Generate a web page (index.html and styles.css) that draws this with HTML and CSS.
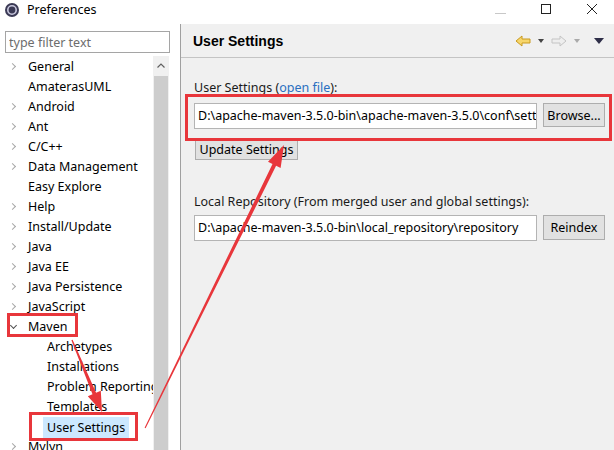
FILE: index.html
```html
<!DOCTYPE html>
<html lang="en">
<head>
    <meta charset="UTF-8">
    <meta name="viewport" content="width=device-width, initial-scale=1.0">
    <title>Preferences</title>
    <link rel="stylesheet" href="styles.css">
</head>
<body>

<div class="window">
    <div class="titlebar">
        <svg class="app-icon" width="16" height="16" viewBox="0 0 16 16">
            <circle cx="8" cy="8" r="7" fill="#3b3a55"/>
            <circle cx="8" cy="8" r="4.2" fill="none" stroke="#c9c8de" stroke-width="1.6"/>
            <circle cx="8" cy="8" r="2.2" fill="#3b3a55"/>
        </svg>
        <span class="title">Preferences</span>
        <div class="controls">
            <span class="ctl ctl-min"></span>
            <span class="ctl ctl-max"></span>
            <svg class="ctl" width="12" height="12" viewBox="0 0 12 12">
                <path d="M1 1 L11 11 M11 1 L1 11" stroke="#222" stroke-width="1"/>
            </svg>
        </div>
    </div>

    <div class="main">
        <aside class="sidebar">
            <input class="filter" type="text" placeholder="type filter text">
            <div class="tree-wrap">
                <ul class="tree">
                    <li><span class="chev"></span>General</li>
                    <li><span class="chev none"></span>AmaterasUML</li>
                    <li><span class="chev"></span>Android</li>
                    <li><span class="chev"></span>Ant</li>
                    <li><span class="chev"></span>C/C++</li>
                    <li><span class="chev"></span>Data Management</li>
                    <li><span class="chev none"></span>Easy Explore</li>
                    <li><span class="chev"></span>Help</li>
                    <li><span class="chev"></span>Install/Update</li>
                    <li><span class="chev"></span>Java</li>
                    <li><span class="chev"></span>Java EE</li>
                    <li><span class="chev"></span>Java Persistence</li>
                    <li><span class="chev"></span>JavaScript</li>
                    <li><span class="chev open"></span>Maven</li>
                    <li class="child">Archetypes</li>
                    <li class="child">Installations</li>
                    <li class="child">Problem Reporting</li>
                    <li class="child">Templates</li>
                    <li class="child"><span class="selected">User Settings</span></li>
                    <li><span class="chev"></span>Mylyn</li>
                </ul>
                <div class="scrollbar">
                    <div class="scroll-up">
                        <svg width="8" height="5" viewBox="0 0 8 5"><path d="M0.5 4.5 L4 1 L7.5 4.5" fill="none" stroke="#606060" stroke-width="1.2"/></svg>
                    </div>
                    <div class="scroll-thumb"></div>
                </div>
            </div>
        </aside>

        <section class="panel">
            <header class="panel-head">
                <h1>User Settings</h1>
                <div class="nav">
                    <svg width="16" height="12" viewBox="0 0 16 12">
                        <path d="M1 6 L7 1 L7 4 L15 4 L15 8 L7 8 L7 11 Z" fill="#f7d66b" stroke="#c99a1e" stroke-width="1"/>
                    </svg>
                    <span class="drop"></span>
                    <svg width="16" height="12" viewBox="0 0 16 12">
                        <path d="M15 6 L9 1 L9 4 L1 4 L1 8 L9 8 L9 11 Z" fill="#eeeeee" stroke="#c4c4c4" stroke-width="1"/>
                    </svg>
                    <span class="drop light"></span>
                    <span class="drop dark"></span>
                </div>
            </header>
            <div class="panel-body">
                <div class="label">User Settings (<a href="#">open file</a>):</div>
                <div class="field-row">
                    <div class="textbox">D:\apache-maven-3.5.0-bin\apache-maven-3.5.0\conf\settings.xml</div>
                    <button class="btn">Browse...</button>
                </div>
                <button class="btn update">Update Settings</button>

                <div class="label repo-label">Local Repository (From merged user and global settings):</div>
                <div class="field-row repo-row">
                    <div class="textbox">D:\apache-maven-3.5.0-bin\local_repository\repository</div>
                    <button class="btn">Reindex</button>
                </div>
            </div>
        </section>
    </div>

    <!-- red markup drawn over the screenshot -->
    <svg class="annotations" width="614" height="450" viewBox="0 0 614 450">
        <g fill="none" stroke="#e8363b" stroke-width="3">
            <rect x="8.5" y="314.5" width="68" height="21"/>
            <rect x="30.5" y="413.5" width="106" height="26"/>
            <rect x="186.5" y="95.5" width="424" height="44"/>
        </g>
        <g fill="#e8363b">
            <polygon points="71.4,340.3 92.5,394.3 87.8,396.2 102,412 100.8,390.8 96.1,392.7 72.6,339.7"/>
            <polygon points="144.6,427.8 272.5,164.0 268.0,161.7 284,145 280.6,167.9 276.1,165.7 145.6,428.3"/>
        </g>
    </svg>
</div>

</body>
</html>
```

FILE: styles.css
```css
* {
    box-sizing: border-box;
}
body {
    margin: 0;
    background: #fff;
    font-family: "Noto Sans", "Open Sans", sans-serif;
    font-size: 12px;
    color: #000;
}
.window {
    position: relative;
    width: 614px;
    height: 450px;
    overflow: hidden;
    background: #fff;
}

/* title bar */
.titlebar {
    height: 24px;
    display: flex;
    align-items: center;
    padding-left: 4px;
}
.app-icon {
    margin-top: -4px;
}
.title {
    margin-left: 7px;
    margin-top: -6px;
    font-size: 12.5px;
}
.controls {
    margin-left: auto;
    display: flex;
    align-items: center;
    gap: 35px;
    padding-right: 16px;
    margin-top: -7px;
}
.ctl {
    display: block;
}
.ctl-min {
    width: 11px;
    height: 1px;
    background: #c8c8c8;
    margin-top: 9px;
}
.ctl-max {
    width: 10px;
    height: 10px;
    border: 1px solid #222;
}

.main {
    display: flex;
    height: 426px;
}

/* left tree */
.sidebar {
    width: 180px;
    flex: none;
    padding-top: 7px;
}
.filter {
    display: block;
    width: 165px;
    height: 22px;
    margin-left: 5px;
    border: 1px solid #a5a5a5;
    padding: 0 3px;
    font: inherit;
    font-size: 12.5px;
}
.filter::placeholder {
    color: #6d6d6d;
}
.tree-wrap {
    display: flex;
    margin-top: 3px;
    height: 400px;
}
.tree {
    list-style: none;
    margin: 1px 0 0 0;
    padding: 0;
    width: 153px;
    overflow: hidden;
}
.tree li {
    height: 20px;
    line-height: 20px;
    white-space: nowrap;
    display: flex;
    align-items: center;
    font-size: 12.5px;
}
.chev {
    width: 28px;
    height: 20px;
    flex: none;
    position: relative;
}
.chev::before {
    content: "";
    position: absolute;
    left: 10px;
    top: 7px;
    width: 4px;
    height: 4px;
    border-right: 1.3px solid #a8a8a8;
    border-bottom: 1.3px solid #a8a8a8;
    transform: rotate(-45deg);
}
.chev.none::before {
    display: none;
}
.chev.open::before {
    left: 11px;
    top: 6px;
    border-color: #505050;
    transform: rotate(45deg);
}
.tree li.child {
    padding-left: 47px;
}
.selected {
    background: #cce8ff;
    margin-left: -4px;
    padding: 0 4px;
    line-height: 21px;
}
.scrollbar {
    width: 16px;
    flex: none;
    background: #f0f0f0;
}
.scroll-up {
    height: 18px;
    display: flex;
    justify-content: center;
    align-items: center;
}
.scroll-thumb {
    margin: 2px 1px 0 1px;
    height: 380px;
    background: #cdcdcd;
}

/* right page */
.panel {
    flex: 1;
    background: #f0f0f0;
    border-left: 1px solid #a0a0a0;
}
.panel-head {
    height: 34px;
    border-bottom: 1px solid #c4c4c4;
    display: flex;
    align-items: center;
    padding-left: 12px;
    padding-right: 10px;
}
.panel-head h1 {
    margin: 0;
    font-family: "Liberation Sans", Arial, sans-serif;
    font-size: 14px;
    font-weight: bold;
}
.nav {
    margin-left: auto;
    display: flex;
    align-items: center;
    gap: 7px;
}
.drop {
    width: 0;
    height: 0;
    border-left: 3.5px solid transparent;
    border-right: 3.5px solid transparent;
    border-top: 4px solid #444;
}
.drop.light {
    border-top-color: #aaa;
}
.drop.dark {
    margin-left: 7px;
    border-left-width: 5px;
    border-right-width: 5px;
    border-top: 6px solid #2e2e48;
}

.panel-body {
    padding: 22px 9px 0 13px;
}
.label {
    line-height: 16px;
    font-size: 12.5px;
    color: #1a1a1a;
}
.label a {
    color: #2a6fc0;
    text-decoration: none;
}
.field-row {
    display: flex;
    gap: 6px;
    margin-top: 7px;
}
.textbox {
    width: 343px;
    height: 26px;
    line-height: 24px;
    background: #fff;
    border: 1px solid #b4b4b4;
    padding: 0 3px;
    white-space: nowrap;
    overflow: hidden;
    font-size: 12.5px;
}
.btn {
    height: 24px;
    padding: 0;
    background: #e1e1e1;
    border: 1px solid #adadad;
    font: inherit;
    font-size: 12.5px;
    color: #000;
    white-space: nowrap;
}
.field-row .btn {
    width: 62px;
}
.update {
    display: block;
    margin-top: 9px;
    margin-left: 1px;
    height: 22px;
    width: 103px;
}
.repo-label {
    margin-top: 34px;
}
.repo-row {
    margin-top: 5px;
}
.repo-row .btn {
    height: 25px;
}

.annotations {
    position: absolute;
    left: 0;
    top: 0;
    pointer-events: none;
}
```
